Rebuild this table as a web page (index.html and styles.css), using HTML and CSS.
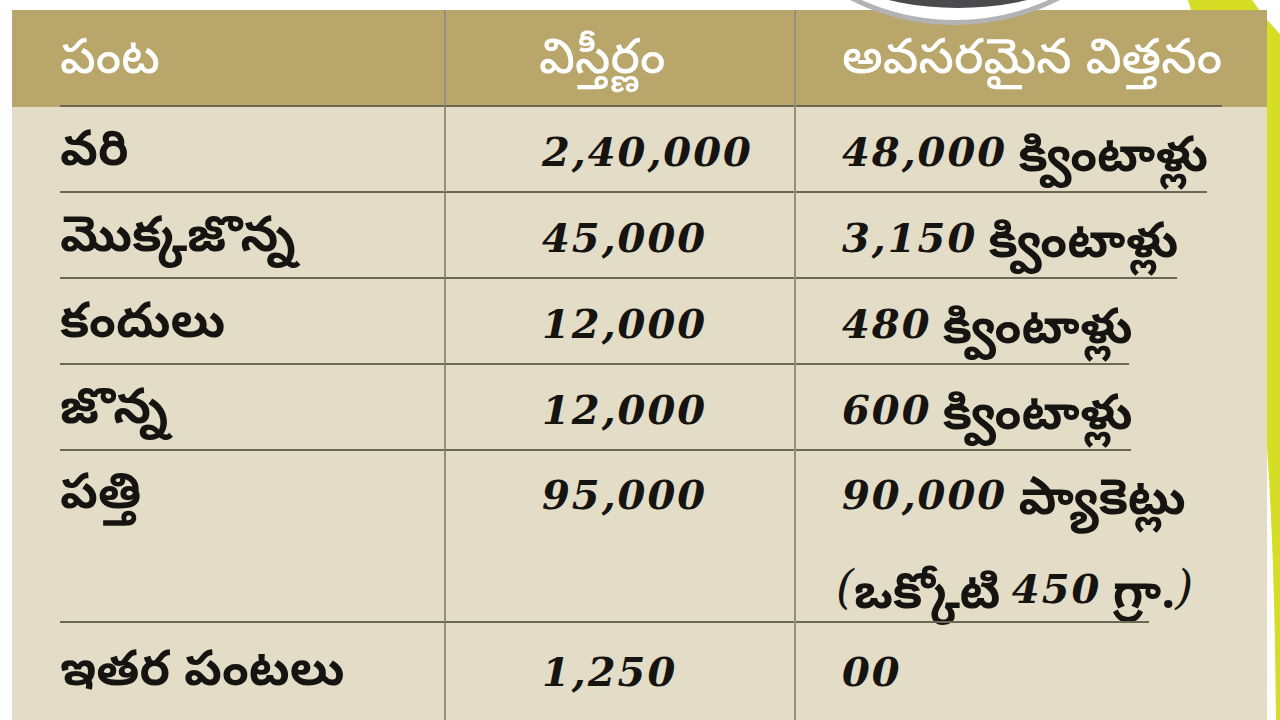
FILE: index.html
```html
<!DOCTYPE html>
<html lang="te">
<head>
<meta charset="utf-8">
<title>పంట విత్తనం</title>
<link rel="stylesheet" href="styles.css">
</head>
<body>
<div class="page">
  <svg class="stripe" width="1280" height="720" viewBox="0 0 1280 720" aria-hidden="true">
    <path d="M1188,0 L1252,0 C1262,14 1272,26 1280,34 L1280,720 L1276,720 C1274,520 1268,240 1188,0 Z" fill="#d6dd25"/>
  </svg>
  <div class="badge" aria-hidden="true"><div class="badge-inner"></div></div>
  <div class="table">
    <div class="cell c1 head"><span class="txt">పంట</span></div>
    <div class="cell c2 head"><span class="txt">విస్తీర్ణం</span></div>
    <div class="cell c3 head w-h"><span class="txt">అవసరమైన విత్తనం</span></div>

    <div class="cell c1"><span class="txt">వరి</span></div>
    <div class="cell c2"><span class="num">2,40,000</span></div>
    <div class="cell c3 w-1"><span class="num">48,000</span> <span class="txt">క్వింటాళ్లు</span></div>

    <div class="cell c1"><span class="txt">మొక్కజొన్న</span></div>
    <div class="cell c2"><span class="num">45,000</span></div>
    <div class="cell c3 w-2"><span class="num">3,150</span> <span class="txt">క్వింటాళ్లు</span></div>

    <div class="cell c1"><span class="txt">కందులు</span></div>
    <div class="cell c2"><span class="num">12,000</span></div>
    <div class="cell c3 w-3"><span class="num">480</span> <span class="txt">క్వింటాళ్లు</span></div>

    <div class="cell c1"><span class="txt">జొన్న</span></div>
    <div class="cell c2"><span class="num">12,000</span></div>
    <div class="cell c3 w-4"><span class="num">600</span> <span class="txt">క్వింటాళ్లు</span></div>

    <div class="cell c1 tall"><span class="txt">పత్తి</span></div>
    <div class="cell c2 tall"><span class="num">95,000</span></div>
    <div class="cell c3 tall w-5"><span class="num">90,000</span> <span class="txt">ప్యాకెట్లు</span><br><span class="num paren">(</span><span class="txt">ఒక్కోటి</span> <span class="num">450</span> <span class="txt">గ్రా.</span><span class="num paren">)</span></div>

    <div class="cell c1 last"><span class="txt">ఇతర పంటలు</span></div>
    <div class="cell c2 last"><span class="num">1,250</span></div>
    <div class="cell c3 last"><span class="num">00</span></div>
  </div>
</div>
</body>
</html>
```

FILE: styles.css
```css
* { box-sizing: border-box; }
html, body { margin: 0; padding: 0; background: #ffffff; }
body {
  width: 1280px;
  height: 720px;
  overflow: hidden;
  font-family: "Noto Sans Telugu", "Noto Sans", sans-serif;
}
.page {
  position: relative;
  width: 1280px;
  height: 720px;
  padding: 10px 0 0 12px;
}
.stripe {
  position: absolute;
  left: 0;
  top: 0;
  z-index: 0;
}
.badge {
  position: absolute;
  z-index: 3;
  left: 722px;
  top: -441px;
  width: 466px;
  height: 466px;
  border-radius: 50%;
  background: #ffffff;
  border: 5px solid #b3b3b5;
  overflow: hidden;
}
.badge-inner {
  position: absolute;
  left: -74px;
  top: -166px;
  width: 610px;
  height: 610px;
  border-radius: 50%;
  background: #4b4b4d;
}
.table {
  position: relative;
  z-index: 1;
  width: 1255px;
  height: 710px;
  background: #e3dcc6;
  display: grid;
  grid-template-columns: 432px 350px 473px;
  grid-template-rows: 97px 86px 86px 86px 86px 172px 1fr;
  background-image: linear-gradient(#b8a66b, #b8a66b);
  background-size: 100% 97px;
  background-repeat: no-repeat;
}
.cell {
  color: #161411;
  font-size: 40px;
  line-height: 84px;
  padding-top: 3px;
  white-space: nowrap;
}
.c1 {
  margin-left: 48px;
  border-bottom: 2px solid #6d6856;
}
.c2 {
  padding-left: 96px;
  border-left: 2px solid #958f7c;
  border-bottom: 2px solid #6d6856;
}
.c3 {
  padding-left: 46px;
  border-left: 2px solid #958f7c;
  position: relative;
}
.c3::after {
  content: "";
  position: absolute;
  left: 0;
  bottom: 0;
  height: 2px;
  background: #6d6856;
  width: var(--rule, 0px);
}
.w-h { --rule: 426px; }
.w-1 { --rule: 411px; }
.w-2 { --rule: 381px; }
.w-3 { --rule: 333px; }
.w-4 { --rule: 335px; }
.w-5 { --rule: 353px; }
.head {
  color: #ffffff;
  line-height: 100px;
  padding-top: 0;
}
.c2.head { padding-left: 93px; }
.tall { line-height: 82px; }
.c3.tall { padding-left: 40px; }
.c3.tall .num:first-child { margin-left: 6px; }
.last { border-bottom: none; line-height: 92px; }
.txt {
  font-size: 49px;
  font-weight: 700;
  vertical-align: -5px;
}
.head .txt { font-weight: 500; vertical-align: -5px; }
.num {
  font-family: "DejaVu Serif", serif;
  font-weight: bold;
  font-style: italic;
  font-size: 40px;
  letter-spacing: 2px;
}
.paren {
  font-size: 46px;
  font-weight: normal;
  letter-spacing: 0;
}
```
